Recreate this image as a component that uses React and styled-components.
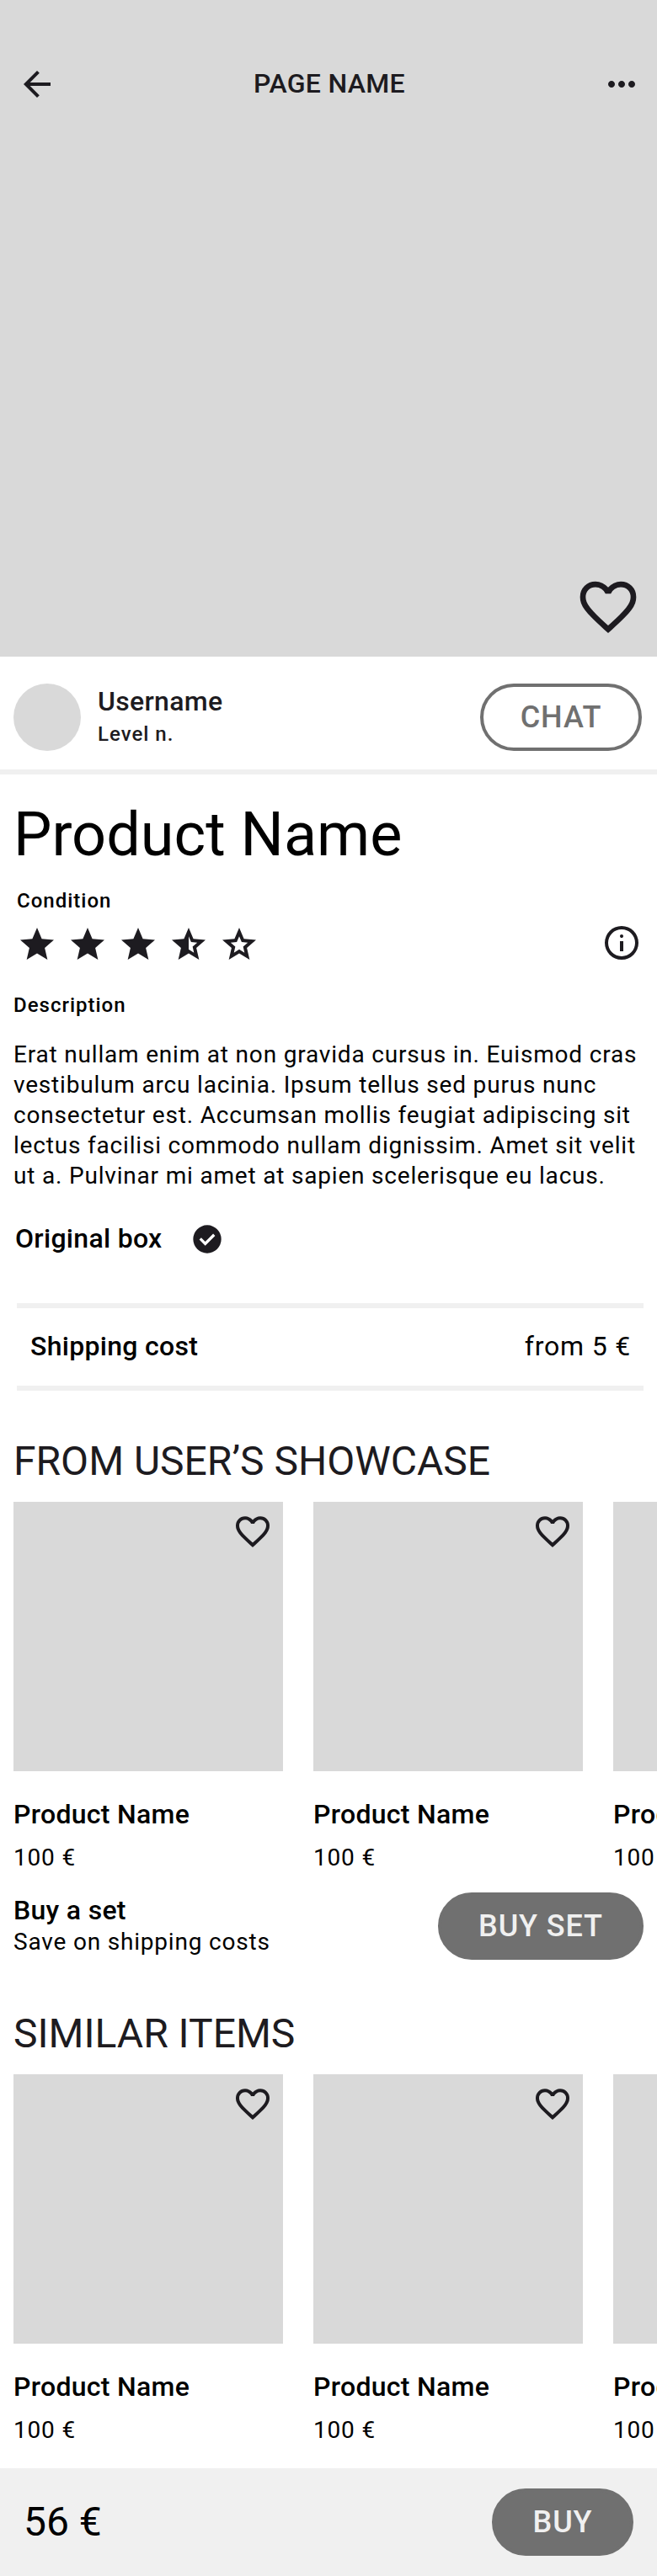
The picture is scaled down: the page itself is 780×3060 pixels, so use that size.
import React from "react";
import styled, { createGlobalStyle } from "styled-components";

const ink = "#1d1b20";
const grey = "#d9d9d9";
const pale = "#f0f0f0";
const dark = "#707070";

const GlobalStyle = createGlobalStyle`
  *, *::before, *::after { box-sizing: border-box; }
  body { margin: 0; background: #fff; }
  h1, h2, h3, p { margin: 0; font-weight: inherit; }
  button { font: inherit; margin: 0; }
`;

const Page = styled.main`
  width: 780px;
  min-height: 3060px;
  overflow: hidden;
  background: #fff;
  color: #000;
  font-family: Roboto, sans-serif;
`;

const Hero = styled.header`
  display: flex;
  flex-direction: column;
  justify-content: space-between;
  height: 780px;
  padding: 76px 18px 18px 20px;
  background: ${grey};
  color: ${ink};
`;

const TopBar = styled.div`
  display: flex;
  justify-content: space-between;
  align-items: flex-start;
`;

const PageTitle = styled.h1`
  font-size: 32px;
  font-weight: 500;
  line-height: 46px;
  letter-spacing: 0.3px;
`;

const Glyph = styled.svg`
  display: block;
  flex: none;
  width: ${(p) => p.$size || 48}px;
  height: ${(p) => p.$size || 48}px;
  fill: ${ink};
`;

const HeroAction = styled.div`
  align-self: flex-end;
`;

const SellerRow = styled.section`
  display: flex;
  height: 140px;
  padding: 32px 18px 0 16px;
  border-bottom: 6px solid ${pale};
  color: ${ink};
`;

const Avatar = styled.div`
  width: 80px;
  height: 80px;
  border-radius: 50%;
  background: ${grey};
`;

const SellerInfo = styled.div`
  flex: 1;
  margin-left: 20px;
`;

const SellerName = styled.div`
  font-size: 32px;
  font-weight: 500;
  line-height: 42px;
  letter-spacing: 0.3px;
`;

const SellerLevel = styled.div`
  font-size: 24px;
  font-weight: 500;
  line-height: 36px;
  letter-spacing: 1px;
`;

const Pill = styled.button`
  flex: none;
  width: ${(p) => p.$width}px;
  height: 80px;
  padding: 0;
  border: 4px solid ${dark};
  border-radius: 40px;
  background: ${(p) => (p.$outlined ? "#fff" : dark)};
  color: ${(p) => (p.$outlined ? dark : pale)};
  font-size: 36px;
  font-weight: 500;
  line-height: 40px;
  letter-spacing: 0.9px;
`;

const Details = styled.section`
  padding: 29px 16px 0;
`;

const ProductTitle = styled.h2`
  font-size: 72px;
  line-height: 85px;
`;

const Label = styled.h3`
  margin: ${(p) => p.$margin};
  font-size: 24px;
  font-weight: 500;
  line-height: 32px;
  letter-spacing: 1px;
`;

const RatingRow = styled.div`
  display: flex;
  justify-content: space-between;
  height: 50px;
  margin: 10px 2px 0 4px;
`;

const Stars = styled.div`
  display: flex;
  gap: 12px;
  padding-top: 2px;
`;

const Description = styled.p`
  margin-top: 25px;
  font-size: 28px;
  line-height: 36px;
  letter-spacing: 0.81px;
  white-space: nowrap;
`;

const BoxRow = styled.div`
  display: flex;
  gap: 33px;
  height: 40px;
  margin: 37px 0 0 2px;
`;

const Strong = styled.div`
  font-size: 32px;
  font-weight: 500;
  line-height: ${(p) => p.$line || 38}px;
  letter-spacing: 0.3px;
`;

const ShippingRow = styled.div`
  display: flex;
  justify-content: space-between;
  height: 104px;
  margin: 56px 0 0 4px;
  padding: 0 15px 0 16px;
  border-top: 6px solid ${pale};
  border-bottom: 6px solid ${pale};
`;

const ShippingPrice = styled.div`
  font-size: 32px;
  line-height: 90px;
  letter-spacing: 0.8px;
`;

const Shelf = styled.section`
  padding: ${(p) => p.$top}px 16px 0;
`;

const ShelfTitle = styled.h2`
  color: ${ink};
  font-size: 48px;
  line-height: 57px;
`;

const Cards = styled.div`
  display: flex;
  gap: 36px;
  margin-top: 20px;
`;

const Card = styled.article`
  flex: none;
  width: 320px;
`;

const Thumb = styled.div`
  display: flex;
  justify-content: flex-end;
  height: 320px;
  margin-bottom: 27px;
  padding: 12px;
  background: ${grey};
`;

const Small = styled.div`
  margin-top: ${(p) => p.$gap}px;
  font-size: 28px;
  line-height: 33px;
  letter-spacing: 0.81px;
`;

const SetRow = styled.div`
  display: flex;
  justify-content: space-between;
  height: 80px;
  margin-top: 25px;
`;

const SetText = styled.div`
  padding-top: 2px;
`;

const BuyBar = styled.footer`
  display: flex;
  justify-content: space-between;
  height: 128px;
  margin-top: 29px;
  padding: 24px 28px;
  background: ${pale};
`;

const Total = styled.div`
  padding-top: 11px;
  font-size: 48px;
  line-height: 57px;
`;

const starShape =
  "M233-120l65-281L80-590l288-25 112-265 112 265 288 25-218 189 65 281-247-149-247 149Z";

const paths = {
  back: "m313-440 224 224-57 56-320-320 320-320 57 56-224 224h487v80H313Z",
  more: "M240-400q-33 0-56.500-23.500T160-480q0-33 23.500-56.500T240-560q33 0 56.500 23.500T320-480q0 33-23.500 56.500T240-400Zm240 0q-33 0-56.500-23.500T400-480q0-33 23.500-56.500T480-560q33 0 56.500 23.500T560-480q0 33-23.500 56.500T480-400Zm240 0q-33 0-56.500-23.500T640-480q0-33 23.500-56.500T720-560q33 0 56.500 23.500T800-480q0 33-23.500 56.500T720-400Z",
  heart:
    "m480-120-58-52q-101-91-167-157T150-447.5Q111-500 95.500-544T80-634q0-94 63-157t157-63q52 0 99 22t81 62q34-40 81-62t99-22q94 0 157 63t63 157q0 46-15.500 90T810-447.500Q771-395 705-329T538-172l-58 52Zm0-108q96-86 158-147.500t98-107q36-45.500 50-81t14-70.500q0-60-40-100t-100-40q-47 0-87 26.500T518-680h-76q-15-41-55-67.500T300-774q-60 0-100 40t-40 100q0 35 14 70.500t50 81q36 45.500 98 107T480-228Z",
  star: starShape,
  half: "M480-675v312l126 77-33-144 111-96-146-13-58-136Z" + starShape,
  empty:
    "m354-287 126-76 126 77-33-144 111-96-146-13-58-136-58 135-146 13 111 97-33 143Z" +
    starShape,
  info: "M440-280h80v-240h-80v240Zm40-320q17 0 28.500-11.500T520-640q0-17-11.500-28.500T480-680q-17 0-28.500 11.500T440-640q0 17 11.500 28.500T480-600Zm0 520q-83 0-156-31.500T197-197q-54-54-85.500-127T80-480q0-83 31.500-156T197-763q54-54 127-85.500T480-880q83 0 156 31.500T763-763q54 54 85.500 127T880-480q0 83-31.500 156T763-197q-54 54-127 85.500T480-80Zm0-80q134 0 227-93t93-227q0-134-93-227t-227-93q-134 0-227 93t-93 227q0 134 93 227t227 93Z",
  check:
    "m424-296 282-282-56-56-226 226-114-114-56 56 170 170Zm56 216q-83 0-156-31.500T197-197q-54-54-85.500-127T80-480q0-83 31.500-156T197-763q54-54 127-85.500T480-880q83 0 156 31.500T763-763q54 54 85.500 127T880-480q0 83-31.500 156T763-197q-54 54-127 85.500T480-80Z",
};

const Icon = ({ name, size }) => (
  <Glyph $size={size} viewBox="0 -960 960 960" aria-hidden="true">
    <path d={paths[name]} fillRule="evenodd" />
  </Glyph>
);

const ProductCards = () => (
  <Cards>
    {[0, 1, 2].map((n) => (
      <Card key={n}>
        <Thumb>
          <Icon name="heart" />
        </Thumb>
        <Strong $line={48}>Product Name</Strong>
        <Small $gap={11}>100 €</Small>
      </Card>
    ))}
  </Cards>
);

export default function App() {
  return (
    <Page>
      <GlobalStyle />
      <Hero>
        <TopBar>
          <Icon name="back" />
          <PageTitle>PAGE NAME</PageTitle>
          <Icon name="more" />
        </TopBar>
        <HeroAction>
          <Icon name="heart" size={80} />
        </HeroAction>
      </Hero>

      <SellerRow>
        <Avatar />
        <SellerInfo>
          <SellerName>Username</SellerName>
          <SellerLevel>Level n.</SellerLevel>
        </SellerInfo>
        <Pill $width={192} $outlined>CHAT</Pill>
      </SellerRow>

      <Details>
        <ProductTitle>Product Name</ProductTitle>
        <Label $margin="20px 0 0 4px">Condition</Label>
        <RatingRow>
          <Stars>
            {["star", "star", "star", "half", "empty"].map((name, i) => (
              <Icon key={i} name={name} />
            ))}
          </Stars>
          <Icon name="info" />
        </RatingRow>
        <Label $margin="32px 0 0">Description</Label>
        <Description>
          Erat nullam enim at non gravida cursus in. Euismod cras
          <br />
          vestibulum arcu lacinia. Ipsum tellus sed purus nunc
          <br />
          consectetur est. Accumsan mollis feugiat adipiscing sit
          <br />
          lectus facilisi commodo nullam dignissim. Amet sit velit
          <br />
          ut a. Pulvinar mi amet at sapien scelerisque eu lacus.
        </Description>
        <BoxRow>
          <Strong>Original box</Strong>
          <Icon name="check" size={40} />
        </BoxRow>
        <ShippingRow>
          <Strong $line={90}>Shipping cost</Strong>
          <ShippingPrice>from 5 €</ShippingPrice>
        </ShippingRow>
      </Details>

      <Shelf $top={55}>
        <ShelfTitle>FROM USER’S SHOWCASE</ShelfTitle>
        <ProductCards />
        <SetRow>
          <SetText>
            <Strong>Buy a set</Strong>
            <Small $gap={2}>Save on shipping costs</Small>
          </SetText>
          <Pill $width={244}>BUY SET</Pill>
        </SetRow>
      </Shelf>

      <Shelf $top={59}>
        <ShelfTitle>SIMILAR ITEMS</ShelfTitle>
        <ProductCards />
      </Shelf>

      <BuyBar>
        <Total>56 €</Total>
        <Pill $width={168}>BUY</Pill>
      </BuyBar>
    </Page>
  );
}
